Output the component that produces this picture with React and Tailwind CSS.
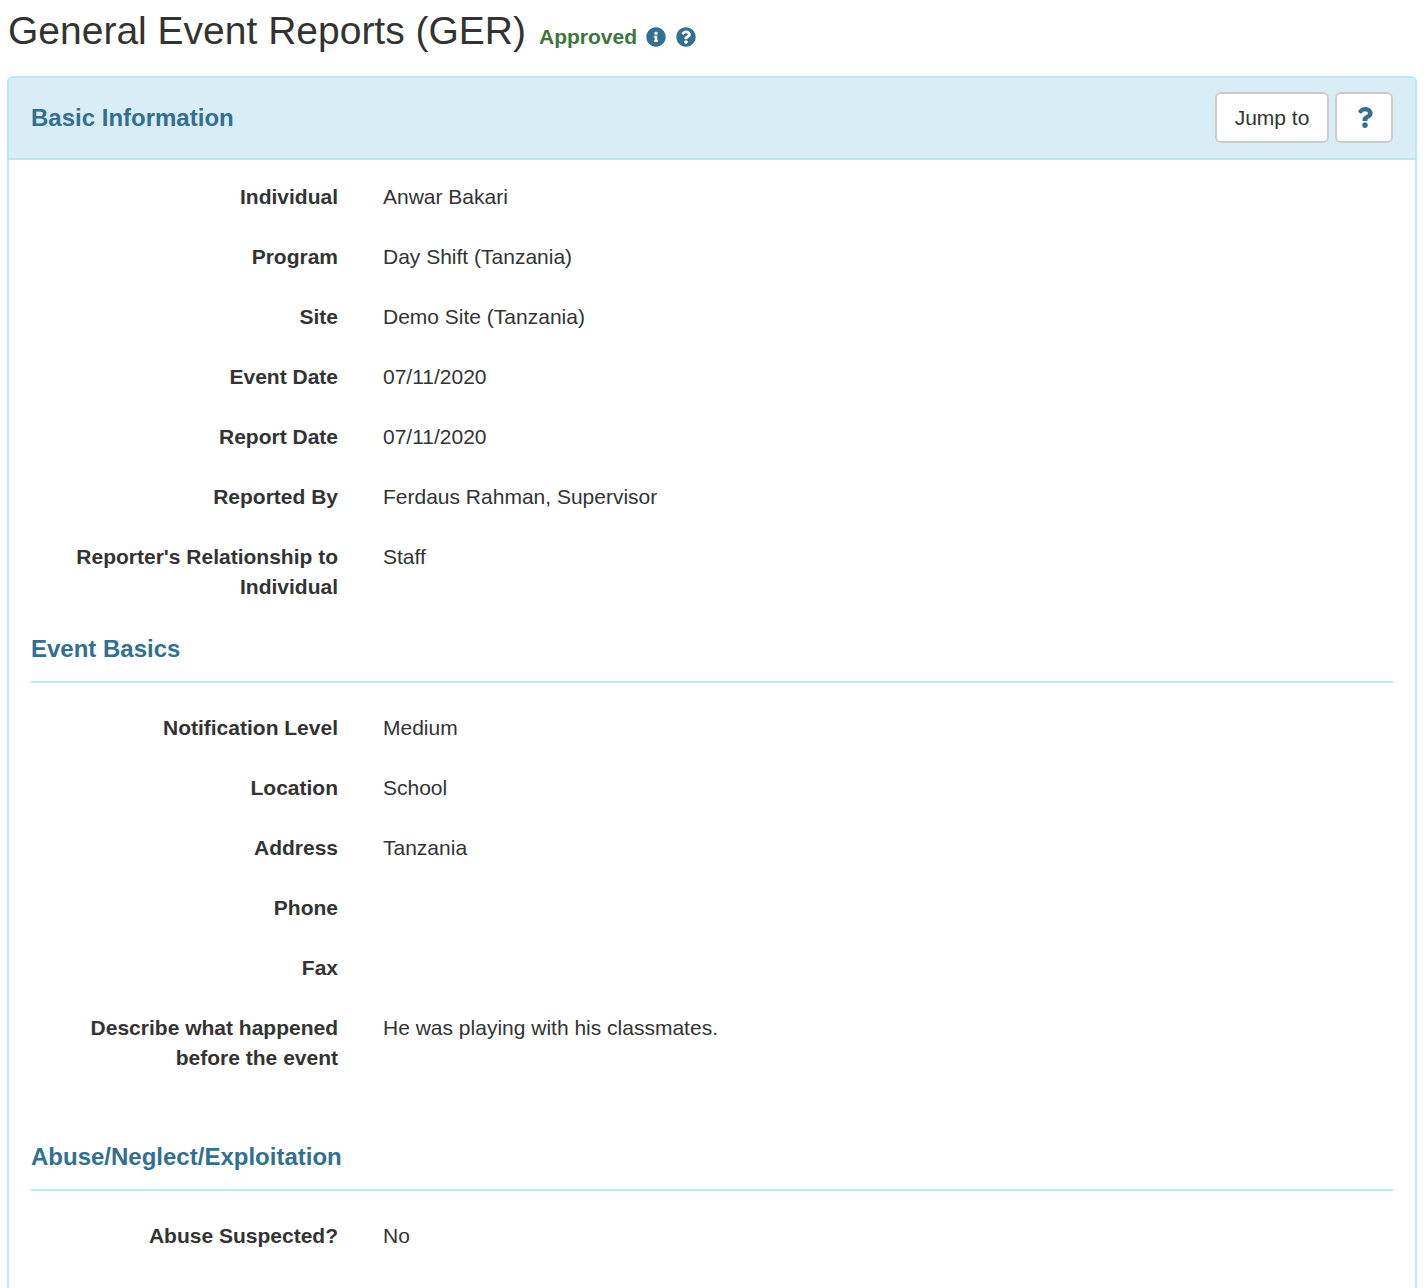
import React from 'react';
import { FaInfoCircle, FaQuestionCircle, FaQuestion } from 'react-icons/fa';

const BASIC = [
  { label: 'Individual', value: 'Anwar Bakari' },
  { label: 'Program', value: 'Day Shift (Tanzania)' },
  { label: 'Site', value: 'Demo Site (Tanzania)' },
  { label: 'Event Date', value: '07/11/2020' },
  { label: 'Report Date', value: '07/11/2020' },
  { label: 'Reported By', value: 'Ferdaus Rahman, Supervisor' },
  { label: "Reporter's Relationship to Individual", value: 'Staff' },
];

const EVENT = [
  { label: 'Notification Level', value: 'Medium' },
  { label: 'Location', value: 'School' },
  { label: 'Address', value: 'Tanzania' },
  { label: 'Phone', value: '' },
  { label: 'Fax', value: '' },
  { label: 'Describe what happened before the event', value: 'He was playing with his classmates.' },
];

function Row({ label, value }) {
  return (
    <div className="flex mb-[30px]">
      <div className="w-[307px] shrink-0 text-right font-bold">{label}</div>
      <div className="pl-[45px]">{value}</div>
    </div>
  );
}

function SectionTitle({ children }) {
  return (
    <div className="border-b-2 border-[#bce8f1] pb-[15px] mb-[30px]">
      <h2 className="text-[24px] leading-[34px] font-bold text-[#31708f]">{children}</h2>
    </div>
  );
}

export default function App() {
  return (
    <div className="pl-[7px] font-['Liberation_Sans',Arial,sans-serif] text-[21px] leading-[30px] text-[#333333] bg-white h-[1288px] overflow-hidden">
      <div className="flex items-baseline pl-px pt-[9px] h-[76px]">
        <h1 className="text-[39px] leading-[44px] font-normal">General Event Reports (GER)</h1>
        <span className="ml-[13px] font-bold text-[#3c763d]">Approved</span>
        <FaInfoCircle className="ml-[9px] mb-[12px] w-5 h-5 text-[#31708f] self-center" />
        <FaQuestionCircle className="ml-[10px] mb-[12px] w-5 h-5 text-[#31708f] self-center" />
      </div>

      <div className="border-2 border-[#bce8f1] rounded-[6px] w-[1410px] min-h-[1300px]">
        <div className="flex justify-between h-[82px] pl-[22px] pr-[22px] pt-[14px] bg-[#d9edf7] border-b-2 border-[#bce8f1] rounded-t-[4px]">
          <h2 className="text-[24px] leading-[51px] font-bold text-[#31708f]">Basic Information</h2>
          <div className="flex gap-[6px]">
            <button className="h-[51px] w-[114px] bg-white border-2 border-[#cccccc] rounded-[6px]">Jump to</button>
            <button className="h-[51px] w-[58px] pl-[2px] flex items-center justify-center bg-white border-2 border-[#cccccc] rounded-[6px]">
              <FaQuestion className="w-[16px] h-[21px] text-[#31708f]" />
            </button>
          </div>
        </div>

        <div className="pl-[22px] pr-[22px] pt-[22px]">
          {BASIC.map((r, i) => <Row key={i} {...r} />)}
          <SectionTitle>Event Basics</SectionTitle>
          {EVENT.map((r, i) => <Row key={i} {...r} />)}
          <div className="h-[37px]" />
          <SectionTitle>Abuse/Neglect/Exploitation</SectionTitle>
          <Row label="Abuse Suspected?" value="No" />
        </div>
      </div>
    </div>
  );
}
